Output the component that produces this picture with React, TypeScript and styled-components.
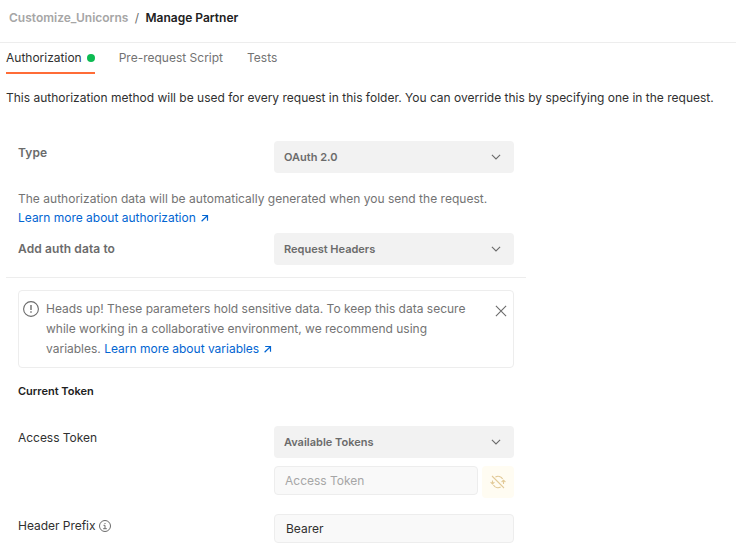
import React from 'react';
import styled, { createGlobalStyle } from 'styled-components';

const GlobalStyle = createGlobalStyle`
  * { box-sizing: border-box; }
  body {
    margin: 0;
    background: #fff;
    color: #303030;
    font: 400 12px/20px Inter, "Liberation Sans", sans-serif;
    letter-spacing: 0;
  }
  svg { display: block; flex: none; }
`;

const Page = styled.main`
  width: 736px;
  height: 546px;
  overflow: hidden;
`;

const Breadcrumb = styled.header`
  display: flex;
  gap: 6.4px;
  height: 43px;
  padding: 8px 9px 0;
  border-bottom: 1px solid #ededed;
  font-weight: 600;
  color: #a6a6a6;
`;

const Current = styled.span`
  color: #212121;
`;

const Slash = styled.span`
  font-weight: 400;
  color: #6b6b6b;
`;

const Tabs = styled.nav`
  display: flex;
  gap: 24px;
  height: 31px;
  padding: 0 6px;
`;

const Tab = styled.div<{ $active?: boolean }>`
  display: flex;
  align-items: center;
  gap: 5px;
  height: 31px;
  padding-bottom: ${(p) => (p.$active ? 0 : 2)}px;
  border-bottom: ${(p) => (p.$active ? '2px solid #ff6c37' : '0')};
  color: ${(p) => (p.$active ? '#303030' : '#737373')};
`;

const Dot = styled.i`
  width: 8px;
  height: 8px;
  border-radius: 50%;
  background: #0cbb52;
`;

const Description = styled.p`
  margin: 0;
  padding: 14px 6px 0;
  white-space: nowrap;
`;

const Section = styled.section<{ $divided?: boolean }>`
  width: 520px;
  margin-left: 6px;
  padding: ${(p) => (p.$divided ? '33px 12px 12px' : '12px 12px 0')};
  border-bottom: ${(p) => (p.$divided ? '1px solid #ededed' : '0')};
`;

const Row = styled.div<{ $top?: number }>`
  display: grid;
  grid-template-columns: 256px 240px;
  margin-top: ${(p) => p.$top ?? 0}px;
`;

const Label = styled.label<{ $bold?: boolean; $offset?: number }>`
  display: flex;
  align-items: center;
  gap: 3px;
  height: 20px;
  margin-top: ${(p) => p.$offset ?? 2}px;
  color: ${(p) => (p.$bold ? '#6b6b6b' : '#303030')};
  font-weight: ${(p) => (p.$bold ? 600 : 400)};
  letter-spacing: ${(p) => (p.$bold ? 0.1 : -0.03)}px;
`;

const Select = styled.div`
  display: flex;
  align-items: center;
  justify-content: space-between;
  height: 32px;
  padding: 0 13px 0 10px;
  border-radius: 4px;
  background: #f2f2f2;
  color: #6b6b6b;
  font-size: 11px;
  font-weight: 600;
`;

const Note = styled.p`
  margin: 16px 0 0;
  color: #737373;
  line-height: 19px;
  letter-spacing: 0.015px;
`;

const Link = styled.a`
  display: inline-flex;
  align-items: center;
  gap: 5px;
  color: #0265d2;
  letter-spacing: -0.01px;
`;

const Alert = styled.div`
  display: flex;
  height: 78px;
  padding: 8px 6px 0 4px;
  border: 1px solid #ededed;
  border-radius: 4px;
  color: #737373;
`;

const AlertText = styled.p`
  flex: 1;
  margin: 0 0 0 7px;
  white-space: nowrap;
`;

const IconSlot = styled.span<{ $top: number }>`
  padding-top: ${(p) => p.$top}px;
`;

const Heading = styled.h2`
  margin: 13px 0 0;
  color: #212121;
  font-size: 11px;
  font-weight: 600;
  line-height: 20px;
`;

const Field = styled.input<{ $inset?: number }>`
  flex: 1;
  width: 100%;
  min-width: 0;
  height: 29px;
  padding: 0 11px 0 ${(p) => p.$inset ?? 10}px;
  border: 1px solid #ededed;
  border-radius: 4px;
  outline: 0;
  background: #f9f9f9;
  color: #303030;
  font: inherit;
  &::placeholder { color: #a6a6a6; opacity: 1; }
`;

const FieldGroup = styled.div`
  display: flex;
  gap: 4px;
  margin-top: 8px;
`;

const SyncButton = styled.button`
  display: flex;
  align-items: center;
  justify-content: center;
  width: 32px;
  height: 32px;
  padding: 0;
  border: 0;
  border-radius: 4px;
  background: #fffcf2;
  color: #e2ca98;
`;

const Chevron = () => (
  <svg width="10" height="6" viewBox="0 0 10 6" fill="none" stroke="#6b6b6b" strokeWidth="1.1">
    <path d="M.9.8 5 4.9 9.1.8" />
  </svg>
);

const ArrowOut = () => (
  <svg width="8" height="8" viewBox="0 0 8 8" fill="none" stroke="currentColor" strokeWidth="1.2">
    <path d="M1.2 1.5h5.3v5.3M6.3 1.7.6 7.2" />
  </svg>
);

const AlertIcon = () => (
  <svg width="16" height="16" viewBox="0 0 16 16" fill="none" stroke="#6b6b6b">
    <circle cx="8" cy="8" r="7.4" strokeWidth="1.1" />
    <path d="M8 4v5M8 10.2v1.5" strokeWidth="1.4" />
  </svg>
);

const CloseIcon = () => (
  <svg width="12" height="12" viewBox="0 0 12 12" fill="none" stroke="#6b6b6b" strokeWidth="1.1">
    <path d="m.9.9 10.2 10.2M11.1.9.9 11.1" />
  </svg>
);

const InfoIcon = () => (
  <svg width="12" height="12" viewBox="0 0 12 12" fill="none" stroke="#6b6b6b">
    <circle cx="6" cy="6" r="5.5" />
    <path d="M4.5 5.3H6v3.4M4.2 8.7h3.6M5.5 3.5h1" />
  </svg>
);

const SyncOffIcon = () => (
  <svg width="16" height="14" viewBox="0 0 16 14" fill="none" stroke="currentColor" strokeWidth="1.1">
    <path d="M2 1 14 13M5.4 1.9A5.6 5.6 0 0 1 12.7 4M2.5 9V5.5M.6 7.2 2.5 9l1.9-1.8M3.4 10A5.6 5.6 0 0 0 10.7 12M13.5 9V5.2M11.6 7l1.9-1.8L15.4 7" />
  </svg>
);

export default function App() {
  return (
    <Page>
      <GlobalStyle />
      <Breadcrumb>
        <span>Customize_Unicorns</span>
        <Slash>/</Slash>
        <Current>Manage Partner</Current>
      </Breadcrumb>
      <Tabs>
        <Tab $active>Authorization<Dot /></Tab>
        <Tab>Pre-request Script</Tab>
        <Tab>Tests</Tab>
      </Tabs>
      <Description>
        This authorization method will be used for every request in this folder. You can override this by specifying one in the request.
      </Description>
      <Section $divided>
        <Row>
          <Label $bold>Type</Label>
          <Select>OAuth 2.0<Chevron /></Select>
        </Row>
        <Note>
          The authorization data will be automatically generated when you send the request.<br />
          <Link>Learn more about authorization<ArrowOut /></Link>
        </Note>
        <Row $top={6}>
          <Label $bold $offset={6}>Add auth data to</Label>
          <Select>Request Headers<Chevron /></Select>
        </Row>
      </Section>
      <Section>
        <Alert>
          <IconSlot $top={2}><AlertIcon /></IconSlot>
          <AlertText>
            Heads up! These parameters hold sensitive data. To keep this data secure<br />
            while working in a collaborative environment, we recommend using<br />
            variables. <Link>Learn more about variables<ArrowOut /></Link>
          </AlertText>
          <IconSlot $top={6}><CloseIcon /></IconSlot>
        </Alert>
        <Heading>Current Token</Heading>
        <Row $top={25}>
          <Label>Access Token</Label>
          <div>
            <Select>Available Tokens<Chevron /></Select>
            <FieldGroup>
              <Field placeholder="Access Token" />
              <SyncButton aria-label="Sync token"><SyncOffIcon /></SyncButton>
            </FieldGroup>
          </div>
        </Row>
        <Row $top={16}>
          <Label>Header Prefix<InfoIcon /></Label>
          <Field $inset={11} defaultValue="Bearer" />
        </Row>
      </Section>
    </Page>
  );
}
